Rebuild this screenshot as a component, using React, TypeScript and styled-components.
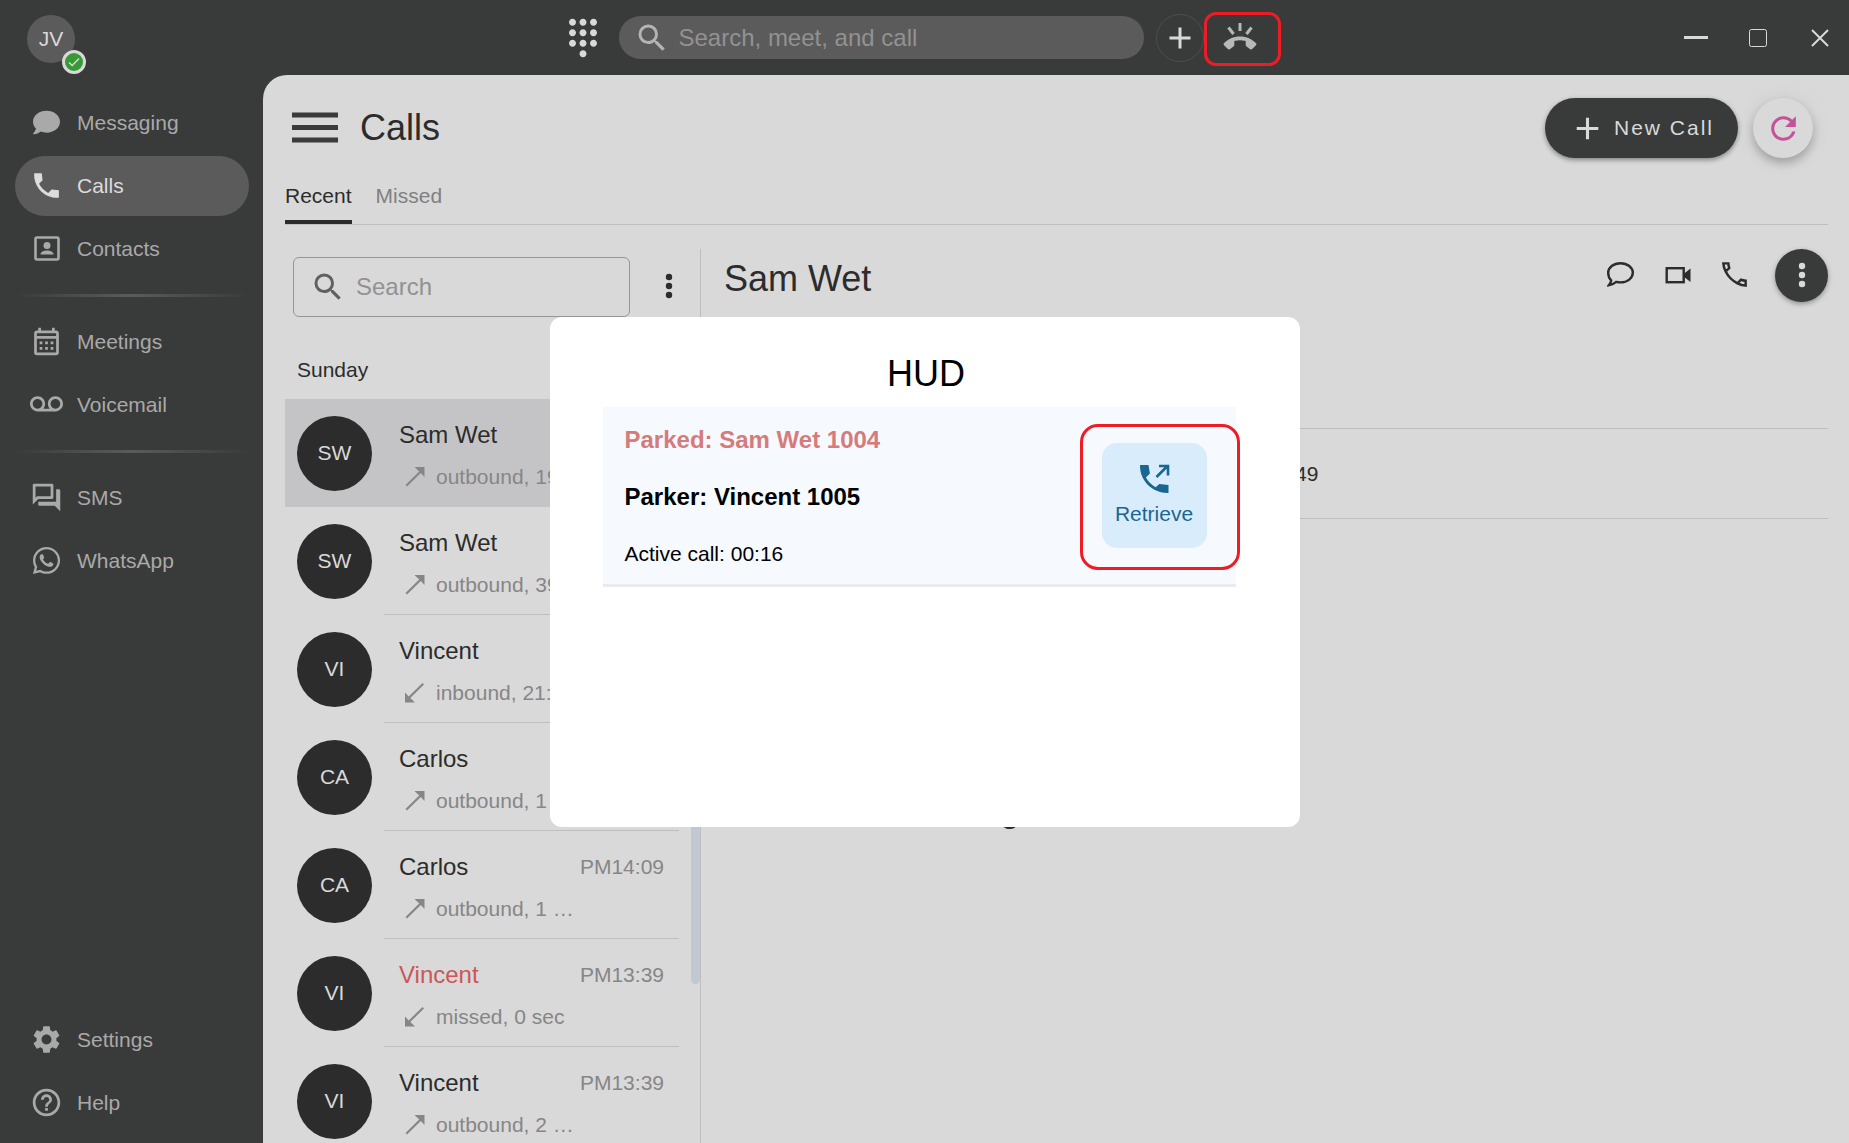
import React from 'react';
import styled, { createGlobalStyle } from 'styled-components';
import { FaComment, FaWhatsapp } from 'react-icons/fa';
import {
  MdAdd, MdDialpad, MdHelpOutline, MdOutlineCalendarMonth,
  MdOutlineForum, MdRefresh, MdSearch, MdSettings, MdVoicemail,
} from 'react-icons/md';

const c = {
  bar: '#393b3a',
  pill: '#5b5b5b',
  page: '#d9d9d9',
  ink: '#2c2c2c',
  muted: '#868686',
  line: '#bebebe',
  mark: '#ee1c24',
};

const Global = createGlobalStyle`
  *, *::before, *::after { box-sizing: border-box; }
  body { margin: 0; background: ${c.bar}; font-family: "Liberation Sans", Arial, sans-serif; font-size: 21px; line-height: 24px; color: ${c.ink}; }
  button, input { font: inherit; color: inherit; }
  button { border: 0; padding: 0; background: none; cursor: pointer; }
  h1, h2, h3, p, ul { margin: 0; padding: 0; font-weight: 400; list-style: none; }
  svg { display: block; flex: none; }
`;

const Shell = styled.div`
  height: 100vh;
  display: flex;
  flex-direction: column;
  overflow: hidden;
`;

/* ---------- top bar ---------- */
const TopBar = styled.header`
  flex: none;
  height: 75px;
  display: grid;
  grid-template-columns: 1fr auto 1fr;
  align-items: center;
  color: ${c.page};
`;
const Profile = styled.button`
  position: relative;
  justify-self: start;
  width: 48px;
  height: 48px;
  margin: 3px 0 0 27px;
  border-radius: 50%;
  background: ${c.pill};
`;
const Status = styled.span`
  position: absolute;
  left: 35px;
  top: 35px;
  width: 24px;
  height: 24px;
  border: 3px solid ${c.page};
  border-radius: 50%;
  background: #369b35;
  display: grid;
  place-items: center;
`;
const TopCenter = styled.div`
  display: flex;
  align-items: center;
`;
const DialButton = styled.button`
  width: 28px;
  height: 42px;
  margin-right: 22px;
  display: flex;
  align-items: center;
  justify-content: center;
`;
const GlobalSearch = styled.label`
  width: 525px;
  height: 43px;
  margin-right: 12px;
  padding-left: 15px;
  display: flex;
  align-items: center;
  gap: 9px;
  border-radius: 22px;
  background: ${c.pill};
  color: #b4b4b4;
`;
const BareInput = styled.input`
  flex: 1;
  min-width: 0;
  border: 0;
  outline: 0;
  padding: 0;
  background: none;
  font-size: 24px;
  line-height: 28px;
  &::placeholder { color: #929292; opacity: 1; }
`;
const AddButton = styled.button`
  width: 48px;
  height: 48px;
  border: 1px solid #4c4d4c;
  border-radius: 50%;
  display: grid;
  place-items: center;
`;
const RingButton = styled.button`
  width: 77px;
  height: 54px;
  margin-top: 3px;
  padding: 0 4px 6px 0;
  border: 3px solid ${c.mark};
  border-radius: 12px;
  display: grid;
  place-items: center;
  color: #b8b8b8;
`;
const WindowButtons = styled.div`
  justify-self: end;
  display: flex;
  gap: 38px;
  padding-right: 17px;
`;
const WindowButton = styled.button`
  width: 24px;
  height: 24px;
  display: grid;
  place-items: center;
`;

/* ---------- sidebar ---------- */
const Body = styled.div`
  flex: 1;
  min-height: 0;
  display: flex;
`;
const Sidebar = styled.nav`
  flex: none;
  width: 263px;
  padding: 18px 14px 10px 15px;
  display: flex;
  flex-direction: column;
`;
const NavGroup = styled.div<{ $end?: boolean }>`
  display: flex;
  flex-direction: column;
  gap: 3px;
  margin-top: ${p => (p.$end ? 'auto' : 0)};
`;
const NavLink = styled.a<{ $active?: boolean }>`
  height: 60px;
  display: flex;
  align-items: center;
  gap: 14px;
  padding-left: 15px;
  border-radius: 30px;
  text-decoration: none;
  color: ${p => (p.$active ? '#dcdcdc' : '#a9a9a9')};
  background: ${p => (p.$active ? c.pill : 'transparent')};
`;
const NavIcon = styled.span`
  width: 33px;
  height: 36px;
  padding-bottom: 2px;
  display: flex;
  align-items: center;
  justify-content: center;
`;
const Divider = styled.hr`
  width: 100%;
  height: 3px;
  margin: 15px 0;
  border: 0;
  background: linear-gradient(90deg, transparent, ${c.pill}, transparent);
`;

/* ---------- main ---------- */
const Main = styled.main`
  flex: 1;
  min-width: 0;
  display: flex;
  flex-direction: column;
  padding: 23px 21px 0 22px;
  background: ${c.page};
  border-top-left-radius: 24px;
`;
const PageHead = styled.div`
  flex: none;
  height: 60px;
  display: flex;
  align-items: center;
  padding: 0 15px 0 7px;
`;
const MenuButton = styled.button`
  width: 46px;
  height: 33px;
  padding-bottom: 2px;
  margin-right: 22px;
`;
const Title = styled.h1`
  flex: 1;
  font-size: 36px;
  line-height: 42px;
`;
const NewCall = styled.button`
  height: 60px;
  display: flex;
  align-items: center;
  gap: 8px;
  padding: 0 24px;
  margin-right: 15px;
  border-radius: 30px;
  background: ${c.bar};
  color: ${c.page};
  letter-spacing: 2px;
  box-shadow: 0 2px 5px rgba(0, 0, 0, 0.4);
`;
const RefreshButton = styled.button`
  width: 60px;
  height: 60px;
  border-radius: 50%;
  display: grid;
  place-items: center;
  background: ${c.page};
  color: #c4529a;
  box-shadow: 0 5px 8px rgba(0, 0, 0, 0.22), 0 2px 20px rgba(0, 0, 0, 0.08);
`;
const Tabs = styled.div`
  flex: none;
  display: flex;
  gap: 24px;
  padding-top: 26px;
  border-bottom: 1px solid ${c.line};
`;
const Tab = styled.button<{ $active?: boolean }>`
  padding-bottom: 12px;
  border-bottom: 4px solid ${p => (p.$active ? c.ink : 'transparent')};
  color: ${p => (p.$active ? c.ink : '#808080')};
`;
const Panes = styled.div`
  flex: 1;
  min-height: 0;
  display: flex;
  padding-top: 24px;
`;
const ListPane = styled.section`
  position: relative;
  flex: none;
  width: 416px;
  overflow: hidden;
  border-right: 1px solid ${c.line};
`;
const Filter = styled.div`
  display: flex;
  align-items: center;
  gap: 27px;
  padding: 8px 0 0 8px;
`;
const FilterBox = styled.label`
  width: 337px;
  height: 60px;
  display: flex;
  align-items: center;
  gap: 10px;
  padding-left: 16px;
  border: 1px solid #969696;
  border-radius: 6px;
  color: #606060;
`;
const DotsButton = styled.button<{ $round?: boolean }>`
  width: ${p => (p.$round ? 53 : 24)}px;
  height: ${p => (p.$round ? 53 : 40)}px;
  padding-bottom: 2px;
  display: grid;
  place-items: center;
  border-radius: 50%;
  color: ${p => (p.$round ? c.page : c.ink)};
  background: ${p => (p.$round ? c.bar : 'none')};
  box-shadow: ${p => (p.$round ? '0 2px 5px rgba(0, 0, 0, 0.35)' : 'none')};
`;
const Day = styled.h2`
  padding: 41px 12px 17px;
  font-size: 21px;
  line-height: 24px;
`;
const Row = styled.li<{ $active?: boolean }>`
  height: 108px;
  display: flex;
  gap: 12px;
  padding-left: 12px;
  margin-right: 21px;
  align-items: center;
  background: ${p => (p.$active ? '#c4c4c6' : 'none')};
`;
const Avatar = styled.span`
  flex: none;
  width: 75px;
  height: 75px;
  border-radius: 50%;
  display: grid;
  place-items: center;
  background: ${c.ink};
  color: ${c.page};
`;
const RowBody = styled.div<{ $active?: boolean }>`
  flex: 1;
  min-width: 0;
  height: 108px;
  padding: 22px 15px 0;
  border-bottom: 1px solid ${p => (p.$active ? 'transparent' : c.line)};
`;
const RowTop = styled.div`
  display: flex;
  align-items: center;
  justify-content: space-between;
  color: ${c.muted};
`;
const Name = styled.h3<{ $missed?: boolean }>`
  font-size: 24px;
  line-height: 28px;
  color: ${p => (p.$missed ? '#cb5757' : c.ink)};
`;
const Meta = styled.p`
  display: flex;
  align-items: center;
  gap: 11px;
  margin-top: 16px;
  padding-left: 6px;
  color: ${c.muted};
`;
const MetaText = styled.span`
  width: 152px;
  overflow: hidden;
  white-space: nowrap;
  text-overflow: ellipsis;
`;
const Thumb = styled.span`
  position: absolute;
  top: 150px;
  right: 0;
  width: 9px;
  height: 585px;
  border-radius: 5px;
  background: #c2c8d2;
`;

/* ---------- detail ---------- */
const Detail = styled.section`
  flex: 1;
  min-width: 0;
  padding-left: 23px;
`;
const DetailHead = styled.div`
  height: 53px;
  display: flex;
  align-items: center;
`;
const DetailName = styled.h2`
  flex: 1;
  padding-top: 6px;
  font-size: 36px;
  line-height: 42px;
`;
const Actions = styled.div`
  display: flex;
  align-items: center;
  gap: 24px;
`;
const Action = styled.button`
  width: 33px;
  height: 36px;
  padding-bottom: 2px;
  display: grid;
  place-items: center;
`;
const HistoryRow = styled.div`
  height: 91px;
  margin-top: 126px;
  padding-left: 571px;
  display: flex;
  align-items: center;
  border: 1px solid ${c.line};
  border-width: 1px 0;
`;
const Note = styled.p`
  padding: 269px 0 0 276px;
  font-size: 36px;
  line-height: 42px;
`;

/* ---------- dialog ---------- */
const Overlay = styled.div`
  position: fixed;
  inset: 0;
  display: grid;
  place-items: center;
`;
const Dialog = styled.section`
  width: 750px;
  height: 510px;
  padding: 36px 64px 0 53px;
  border-radius: 12px;
  background: #fff;
  color: #000;
`;
const DialogTitle = styled.h2`
  padding-left: 14px;
  margin-bottom: 12px;
  text-align: center;
  font-size: 36px;
  line-height: 42px;
`;
const ParkedCall = styled.div`
  height: 180px;
  display: flex;
  align-items: center;
  justify-content: space-between;
  padding-left: 22px;
  border-bottom: 3px solid #ebebed;
  background: #f6f9fe;
`;
const CallInfo = styled.div`
  display: flex;
  flex-direction: column;
  gap: 29px;
  padding-top: 3px;
`;
const Line = styled.p<{ $tone?: 'parked' | 'strong' }>`
  font-size: ${p => (p.$tone ? 24 : 21)}px;
  font-weight: ${p => (p.$tone ? 700 : 400)};
  line-height: 28px;
  color: ${p => (p.$tone === 'parked' ? '#d67b7b' : '#000')};
`;
const Highlight = styled.div`
  width: 160px;
  height: 146px;
  margin: 4px -4px 0 0;
  padding: 16px 0 0 19px;
  border: 3px solid ${c.mark};
  border-radius: 18px;
`;
const Retrieve = styled.button`
  width: 105px;
  height: 105px;
  display: flex;
  flex-direction: column;
  align-items: center;
  padding-top: 18px;
  gap: 5px;
  border-radius: 15px;
  background: #d9ecfc;
  color: #1b6690;
`;

const HANDSET = 'M21 15.46l-5.27-.61-2.52 2.52c-2.83-1.44-5.15-3.75-6.59-6.59l2.53-2.53L8.54 3H3.03C2.45 13.18 10.82 21.55 21 20.97v-5.51z';

const Phone = () => (
  <svg width="33" height="33" viewBox="0 0 24 24" fill="currentColor"><path d={HANDSET} /></svg>
);
const PhoneLine = () => (
  <svg width="33" height="33" viewBox="0 0 24 24" fill="none" stroke="currentColor" strokeWidth="1.8">
    <path d="M3.900 3.900h3.600c.1 1.200.3 2.300.7 3.400L5.600 9.800C4.600 7.900 4 6 3.900 3.900ZM5.600 9.800c1.900 3.800 4.800 6.700 8.600 8.600M14.200 18.400l2.500-2.600c1.100.4 2.200.6 3.400.7v3.600c-2.100-.1-4-.7-5.900-1.700Z" />
  </svg>
);
const PhoneOut = () => (
  <svg width="36" height="36" viewBox="0 0 36 36" fill="currentColor">
    <path d="M4 4h8.500l1.400 8.500-4 4c2.400 4.300 5.500 7.400 9.800 9.800l3.600-3.400 9.200 1.100V32C17 32.500 3.500 20 4 4Z" />
    <path d="M20.500 16 31.500 5M23 5H32V14.500" fill="none" stroke="currentColor" strokeWidth="2.600" />
  </svg>
);
const Ringing = () => (
  <svg width="34" height="27" viewBox="0 0 34 27" fill="currentColor">
    <path d="M17 13.500c6.500 0 12 2.600 16 6.700.6.700.6 1.400 0 2l-3.800 3.900c-.6.600-1.300.600-2 .1l-3.700-2.600c-.5-.4-.8-.9-.8-1.500v-4c-3.700-1.300-7.700-1.300-11.400 0v4c0 .6-.3 1.100-.8 1.500l-3.700 2.600c-.7.500-1.400.500-2-.1L1 22.200c-.6-.6-.6-1.300 0-2 4-4.100 9.500-6.700 16-6.700Z" />
    <path d="M17 0v8M5.500 4.500l5 6.500M28.500 4.500l-5 6.500" fill="none" stroke="currentColor" strokeWidth="3" />
  </svg>
);
const ContactCard = () => (
  <svg width="26" height="25" viewBox="0 0 26 25" fill="currentColor">
    <rect x="1.500" y="1.500" width="23" height="22" rx="1.500" fill="none" stroke="currentColor" strokeWidth="2.600" />
    <circle cx="13" cy="9.500" r="3.500" />
    <path d="M6.500 18.500c0-2.800 3.500-4 6.500-4s6.500 1.200 6.500 4Z" />
  </svg>
);
const Camera = () => (
  <svg width="26" height="18" viewBox="0 0 26 18" fill="currentColor">
    <rect x="1.700" y="2.200" width="17" height="14" fill="none" stroke="currentColor" strokeWidth="2.400" />
    <path d="M18.500 8 25.500 2.500V16L18.500 10.500Z" />
  </svg>
);
const Bubble = () => (
  <svg width="27" height="25" viewBox="0 0 27 25" fill="none" stroke="currentColor" strokeWidth="2.400">
    <path d="M13.500 1.200C20.500 1.200 25.800 5.500 25.800 10.800S20.500 20.400 13.500 20.400c-1.500 0-3-.2-4.300-.5C7.300 21.500 4.700 23.200 1.800 23.400c1.400-1.500 2.300-3.300 2.400-5C2.200 16.500 1.200 14 1.200 10.800 1.200 5.500 6.500 1.200 13.500 1.200Z" />
  </svg>
);
const Dots = () => (
  <svg width="8" height="26" viewBox="0 0 8 26" fill="currentColor">
    <circle cx="4" cy="4" r="3.200" /><circle cx="4" cy="13" r="3.200" /><circle cx="4" cy="22" r="3.200" />
  </svg>
);
const Arrow = ({ out }: { out: boolean }) => (
  <svg width="20" height="20" viewBox="0 0 20 20" fill="currentColor">
    {out
      ? <path d="M9.500 0H19.500V10L15.800 6.100 2 19.500 0.500 18 14.200 4.500Z" />
      : <path d="M10 19.500H0V9.500L3.700 13.400 17.500 0 19 1.500 5.300 15Z" />}
  </svg>
);

type NavEntry = { label: string; icon: React.ReactNode; active?: boolean };
const nav: NavEntry[][] = [
  [
    { label: 'Messaging', icon: <FaComment size={27} /> },
    { label: 'Calls', icon: <Phone />, active: true },
    { label: 'Contacts', icon: <ContactCard /> },
  ],
  [
    { label: 'Meetings', icon: <MdOutlineCalendarMonth size={33} /> },
    { label: 'Voicemail', icon: <MdVoicemail size={33} /> },
  ],
  [
    { label: 'SMS', icon: <MdOutlineForum size={33} /> },
    { label: 'WhatsApp', icon: <FaWhatsapp size={31} /> },
  ],
];
const footer: NavEntry[] = [
  { label: 'Settings', icon: <MdSettings size={33} /> },
  { label: 'Help', icon: <MdHelpOutline size={33} /> },
];

type Call = { initials: string; name: string; meta: string; time?: string; out: boolean; missed?: boolean };
const calls: Call[] = [
  { initials: 'SW', name: 'Sam Wet', meta: 'outbound, 19 …', out: true },
  { initials: 'SW', name: 'Sam Wet', meta: 'outbound, 39 …', out: true },
  { initials: 'VI', name: 'Vincent', meta: 'inbound, 21: …', out: false },
  { initials: 'CA', name: 'Carlos', meta: 'outbound, 1 …', out: true },
  { initials: 'CA', name: 'Carlos', meta: 'outbound, 1 …', time: 'PM14:09', out: true },
  { initials: 'VI', name: 'Vincent', meta: 'missed, 0 sec', time: 'PM13:39', out: false, missed: true },
  { initials: 'VI', name: 'Vincent', meta: 'outbound, 2 …', time: 'PM13:39', out: true },
];

const NavItems = ({ items }: { items: NavEntry[] }) => (
  <>
    {items.map(i => (
      <NavLink key={i.label} href="#" $active={i.active}>
        <NavIcon>{i.icon}</NavIcon>
        {i.label}
      </NavLink>
    ))}
  </>
);

export default function App() {
  return (
    <Shell>
      <Global />
      <TopBar>
        <Profile>
          JV
          <Status>
            <svg width="12" height="10" viewBox="0 0 12 10" fill="none" stroke="#d9d9d9" strokeWidth="1.500"><path d="M1 5.500 4.200 8.500 11 1.500" /></svg>
          </Status>
        </Profile>
        <TopCenter>
          <DialButton aria-label="Dial pad"><MdDialpad size={42} /></DialButton>
          <GlobalSearch>
            <MdSearch size={36} />
            <BareInput aria-label="Search, meet, and call" placeholder="Search, meet, and call" />
          </GlobalSearch>
          <AddButton aria-label="Add"><MdAdd size={36} /></AddButton>
          <RingButton aria-label="Parked calls"><Ringing /></RingButton>
        </TopCenter>
        <WindowButtons>
          <WindowButton aria-label="Minimize">
            <svg width="24" height="3" fill="currentColor"><rect width="24" height="3" /></svg>
          </WindowButton>
          <WindowButton aria-label="Maximize">
            <svg width="18" height="18" fill="none" stroke="currentColor"><rect x="0.500" y="0.500" width="17" height="17" rx="2" /></svg>
          </WindowButton>
          <WindowButton aria-label="Close">
            <svg width="18" height="18" fill="none" stroke="currentColor" strokeWidth="2"><path d="M1 1 17 17M17 1 1 17" /></svg>
          </WindowButton>
        </WindowButtons>
      </TopBar>

      <Body>
        <Sidebar>
          {nav.map((group, i) => (
            <React.Fragment key={i}>
              {i > 0 && <Divider />}
              <NavGroup><NavItems items={group} /></NavGroup>
            </React.Fragment>
          ))}
          <NavGroup $end><NavItems items={footer} /></NavGroup>
        </Sidebar>

        <Main>
          <PageHead>
            <MenuButton aria-label="Menu">
              <svg width="46" height="31" viewBox="0 0 46 31" fill="#3a3b3a">
                <rect width="46" height="5" y="0.500" /><rect width="46" height="5" y="13" /><rect width="46" height="5" y="25.500" />
              </svg>
            </MenuButton>
            <Title>Calls</Title>
            <NewCall><MdAdd size={37} />New Call</NewCall>
            <RefreshButton aria-label="Refresh"><MdRefresh size={37} /></RefreshButton>
          </PageHead>
          <Tabs>
            <Tab $active>Recent</Tab>
            <Tab>Missed</Tab>
          </Tabs>
          <Panes>
            <ListPane>
              <Filter>
                <FilterBox>
                  <MdSearch size={36} />
                  <BareInput aria-label="Search" placeholder="Search" />
                </FilterBox>
                <DotsButton aria-label="List options"><Dots /></DotsButton>
              </Filter>
              <Day>Sunday</Day>
              <ul>
                {calls.map((call, i) => (
                  <Row key={i} $active={i === 0}>
                    <Avatar>{call.initials}</Avatar>
                    <RowBody $active={i === 0}>
                      <RowTop>
                        <Name $missed={call.missed}>{call.name}</Name>
                        {call.time && <span>{call.time}</span>}
                      </RowTop>
                      <Meta>
                        <Arrow out={call.out} />
                        <MetaText>{call.meta}</MetaText>
                      </Meta>
                    </RowBody>
                  </Row>
                ))}
              </ul>
              <Thumb />
            </ListPane>
            <Detail>
              <DetailHead>
                <DetailName>Sam Wet</DetailName>
                <Actions>
                  <Action aria-label="Message"><Bubble /></Action>
                  <Action aria-label="Video"><Camera /></Action>
                  <Action aria-label="Call"><PhoneLine /></Action>
                  <DotsButton $round aria-label="More"><Dots /></DotsButton>
                </Actions>
              </DetailHead>
              <HistoryRow>49</HistoryRow>
              <Note>g</Note>
            </Detail>
          </Panes>
        </Main>
      </Body>

      <Overlay>
        <Dialog role="dialog" aria-labelledby="hud-title">
          <DialogTitle id="hud-title">HUD</DialogTitle>
          <ParkedCall>
            <CallInfo>
              <Line $tone="parked">Parked: Sam Wet 1004</Line>
              <Line $tone="strong">Parker: Vincent 1005</Line>
              <Line>Active call: 00:16</Line>
            </CallInfo>
            <Highlight>
              <Retrieve><PhoneOut />Retrieve</Retrieve>
            </Highlight>
          </ParkedCall>
        </Dialog>
      </Overlay>
    </Shell>
  );
}
